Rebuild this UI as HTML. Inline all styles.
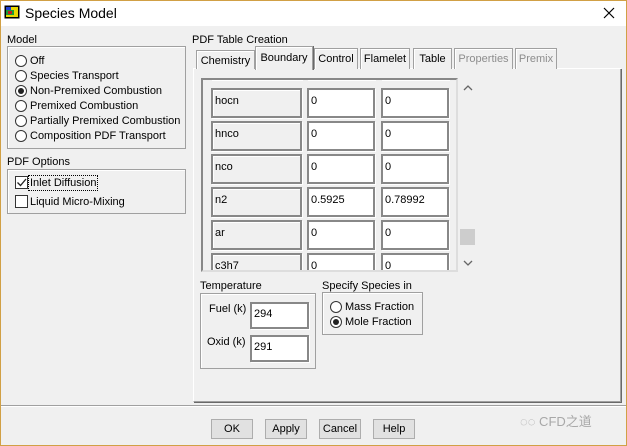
<!DOCTYPE html>
<html><head><meta charset="utf-8"><style>
*{margin:0;padding:0;box-sizing:border-box}
body{width:627px;height:446px;overflow:hidden;background:#f0f0f0;font-family:"Liberation Sans","Noto Sans CJK SC",sans-serif;font-size:11px;color:#000;position:relative}
.a{position:absolute}
.win{left:0;top:0;width:627px;height:446px;border:1px solid #d1a045}
.gb{border:1px solid #a0a0a0;box-shadow:inset 1px 1px 0 #fff}
.rad{width:12px;height:12px;border:1px solid #333;border-radius:50%;background:#fff}
.rad.on::after{content:"";position:absolute;left:2px;top:2px;width:6px;height:6px;border-radius:50%;background:#222}
.chk{width:13px;height:13px;border:1px solid #333;background:#fff}
.lab{white-space:nowrap}
.tab{top:48px;height:21px;border:1px solid #a0a0a0;border-bottom:none;background:#f0f0f0;text-align:center;line-height:21px;box-shadow:inset 1px 1px 0 #fff}
.nb{border:2px solid #888;box-shadow:inset 1px 1px 0 #fff, 1px 1px 0 #fff;background:#f0f0f0;padding:5px 2px}
.vb{border:2px solid #888;box-shadow:inset 1px 1px 0 #fff,1px 1px 0 #fff;background:#fff;padding:5px 2px}
.btn{top:419px;width:42px;height:20px;border:1px solid #adadad;background:#e1e1e1;text-align:center;line-height:19px}
</style></head><body>
<div class="a win"></div>
<div class="a" style="left:1px;top:1px;width:625px;height:25px;background:#fff"></div>
<svg class="a" style="left:4px;top:5px" width="16" height="14"><rect x="0.5" y="0.5" width="15" height="13" fill="#000"/><rect x="2" y="2" width="12" height="10" fill="#e8d800"/><rect x="2" y="5" width="8" height="5" fill="#1a9a3a"/><rect x="4" y="6" width="4" height="3" fill="#c02020"/><rect x="2" y="2" width="5" height="3" fill="#2040d0"/></svg>
<div class="a lab" style="left:25px;top:5px;font-size:14px">Species Model</div>
<svg class="a" style="left:603px;top:7px" width="12" height="12"><path d="M1 1L11 11M11 1L1 11" stroke="#000" stroke-width="1.2"/></svg>

<div class="a lab" style="left:7px;top:34px">Model</div>
<div class="a gb" style="left:7px;top:46px;width:179px;height:103px"></div>
<div class="a rad" style="left:15px;top:55px"></div><div class="a lab" style="left:30px;top:55px">Off</div>
<div class="a rad" style="left:15px;top:70px"></div><div class="a lab" style="left:30px;top:70px">Species Transport</div>
<div class="a rad on" style="left:15px;top:85px"></div><div class="a lab" style="left:30px;top:85px">Non-Premixed Combustion</div>
<div class="a rad" style="left:15px;top:100px"></div><div class="a lab" style="left:30px;top:100px">Premixed Combustion</div>
<div class="a rad" style="left:15px;top:115px"></div><div class="a lab" style="left:30px;top:115px">Partially Premixed Combustion</div>
<div class="a rad" style="left:15px;top:130px"></div><div class="a lab" style="left:30px;top:130px">Composition PDF Transport</div>

<div class="a lab" style="left:7px;top:156px">PDF Options</div>
<div class="a gb" style="left:7px;top:169px;width:179px;height:45px"></div>
<div class="a chk" style="left:15px;top:176px"></div>
<svg class="a" style="left:16px;top:177px" width="11" height="11"><path d="M1.5 5.5L4.5 8.5L10 2" stroke="#222" stroke-width="1.3" fill="none"/></svg>
<div class="a lab" style="left:29px;top:176px;outline:1px dotted #000;padding:0 1px;line-height:14px">Inlet Diffusion</div>
<div class="a chk" style="left:15px;top:195px"></div><div class="a lab" style="left:30px;top:196px">Liquid Micro-Mixing</div>

<div class="a lab" style="left:192px;top:34px">PDF Table Creation</div>
<div class="a" style="left:193px;top:68px;width:428px;height:334px;border:1px solid #a0a0a0;border-top-color:#fff;border-left-color:#fff;box-shadow:1px 1px 0 #696969"></div>
<div class="a" style="left:193px;top:68px;width:428px;height:1px;background:#fff"></div>
<div class="a tab" style="left:196px;width:59px;top:50px;height:19px;line-height:20px">Chemistry</div>
<div class="a tab" style="left:314px;width:44px">Control</div>
<div class="a tab" style="left:360px;width:50px">Flamelet</div>
<div class="a tab" style="left:413px;width:39px">Table</div>
<div class="a tab" style="left:454px;width:59px;color:#8d8d8d">Properties</div>
<div class="a tab" style="left:515px;width:42px;color:#8d8d8d">Premix</div>
<div class="a tab" style="left:255px;width:58px;top:46px;height:24px;line-height:22px;box-shadow:inset 1px 1px 0 #fff,1px 0 0 #696969">Boundary</div>

<div class="a" style="left:201px;top:78px;width:257px;height:194px;border:2px solid #888;border-right-color:#ddd;border-bottom-color:#ddd;overflow:hidden">
 <div class="a nb" style="left:8px;top:-30px;width:91px;height:30px"></div>
 <div class="a vb" style="left:104px;top:-30px;width:68px;height:30px"></div>
 <div class="a vb" style="left:178px;top:-30px;width:68px;height:30px"></div>
 <div class="a nb" style="left:8px;top:8px;width:91px;height:30px">hocn</div><div class="a vb" style="left:104px;top:8px;width:68px;height:30px">0</div><div class="a vb" style="left:178px;top:8px;width:68px;height:30px">0</div>
 <div class="a nb" style="left:8px;top:41px;width:91px;height:30px">hnco</div><div class="a vb" style="left:104px;top:41px;width:68px;height:30px">0</div><div class="a vb" style="left:178px;top:41px;width:68px;height:30px">0</div>
 <div class="a nb" style="left:8px;top:74px;width:91px;height:30px">nco</div><div class="a vb" style="left:104px;top:74px;width:68px;height:30px">0</div><div class="a vb" style="left:178px;top:74px;width:68px;height:30px">0</div>
 <div class="a nb" style="left:8px;top:107px;width:91px;height:30px">n2</div><div class="a vb" style="left:104px;top:107px;width:68px;height:30px">0.5925</div><div class="a vb" style="left:178px;top:107px;width:68px;height:30px">0.78992</div>
 <div class="a nb" style="left:8px;top:140px;width:91px;height:30px">ar</div><div class="a vb" style="left:104px;top:140px;width:68px;height:30px">0</div><div class="a vb" style="left:178px;top:140px;width:68px;height:30px">0</div>
 <div class="a nb" style="left:8px;top:173px;width:91px;height:30px">c3h7</div><div class="a vb" style="left:104px;top:173px;width:68px;height:30px">0</div><div class="a vb" style="left:178px;top:173px;width:68px;height:30px">0</div>
</div>
<svg class="a" style="left:463px;top:84px" width="10" height="8"><path d="M1 6L5 2L9 6" stroke="#666" stroke-width="1.3" fill="none"/></svg>
<div class="a" style="left:460px;top:229px;width:15px;height:16px;background:#cdcdcd"></div>
<svg class="a" style="left:463px;top:259px" width="10" height="8"><path d="M1 2L5 6L9 2" stroke="#666" stroke-width="1.3" fill="none"/></svg>

<div class="a lab" style="left:200px;top:280px">Temperature</div>
<div class="a gb" style="left:200px;top:293px;width:116px;height:76px"></div>
<div class="a lab" style="left:209px;top:303px">Fuel (k)</div>
<div class="a vb" style="left:250px;top:302px;width:59px;height:27px;padding:4px 2px">294</div>
<div class="a lab" style="left:207px;top:336px">Oxid (k)</div>
<div class="a vb" style="left:250px;top:335px;width:59px;height:27px;padding:4px 2px">291</div>

<div class="a lab" style="left:322px;top:280px">Specify Species in</div>
<div class="a gb" style="left:322px;top:292px;width:101px;height:43px"></div>
<div class="a rad" style="left:330px;top:301px"></div><div class="a lab" style="left:345px;top:301px">Mass Fraction</div>
<div class="a rad on" style="left:330px;top:316px"></div><div class="a lab" style="left:345px;top:316px">Mole Fraction</div>

<div class="a" style="left:1px;top:405px;width:625px;height:1px;background:#a0a0a0"></div>
<div class="a" style="left:1px;top:406px;width:625px;height:1px;background:#fff"></div>
<div class="a btn" style="left:211px">OK</div>
<div class="a btn" style="left:265px">Apply</div>
<div class="a btn" style="left:319px">Cancel</div>
<div class="a btn" style="left:373px">Help</div>
<div class="a lab" style="left:520px;top:411px;color:#a8a8a8;font-size:13px">◌◌ CFD之道</div>
</body></html>
